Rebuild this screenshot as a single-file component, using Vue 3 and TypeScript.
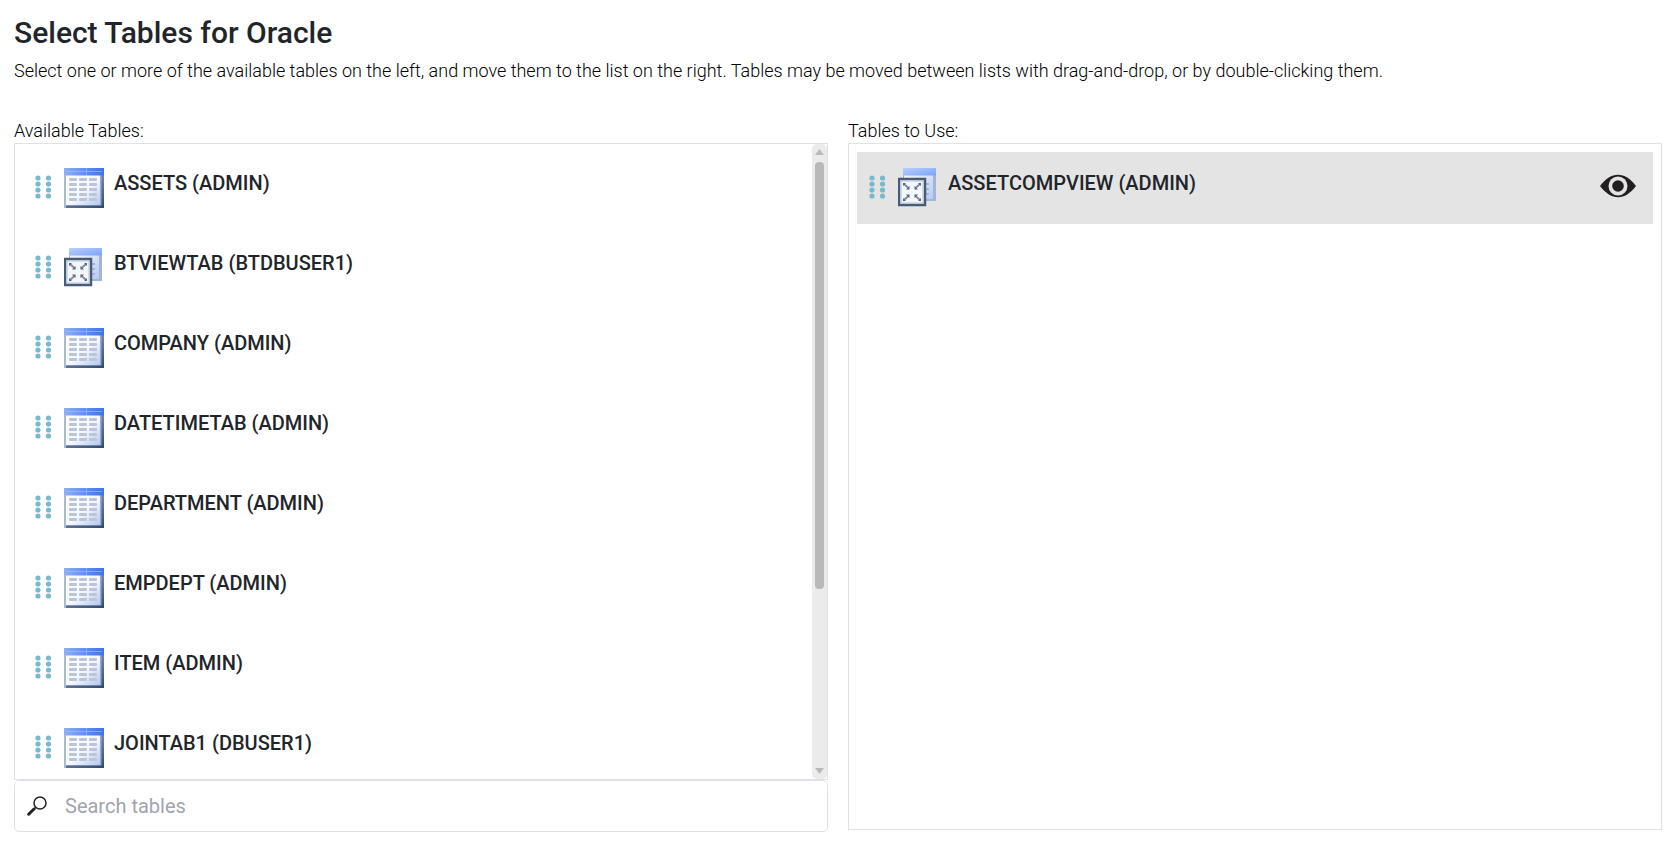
<script setup lang="ts">
import { ref } from 'vue'

interface TableEntry {
  name: string
  kind: 'table' | 'view'
}

const available: TableEntry[] = [
  { name: 'ASSETS (ADMIN)', kind: 'table' },
  { name: 'BTVIEWTAB (BTDBUSER1)', kind: 'view' },
  { name: 'COMPANY (ADMIN)', kind: 'table' },
  { name: 'DATETIMETAB (ADMIN)', kind: 'table' },
  { name: 'DEPARTMENT (ADMIN)', kind: 'table' },
  { name: 'EMPDEPT (ADMIN)', kind: 'table' },
  { name: 'ITEM (ADMIN)', kind: 'table' },
  { name: 'JOINTAB1 (DBUSER1)', kind: 'table' },
]
const selected: TableEntry[] = [{ name: 'ASSETCOMPVIEW (ADMIN)', kind: 'view' }]

const columns = [
  { id: 'available', label: 'Available Tables:', items: available },
  { id: 'selected', label: 'Tables to Use:', items: selected },
]
const search = ref('')
const dotRows = [3, 9, 15, 21]
const cellRows = [11, 16, 21, 26, 31]
</script>

<template>
  <main class="page">
    <svg class="defs" width="0" height="0" aria-hidden="true">
      <defs>
        <linearGradient id="head" x1="0" y1="0" x2="1" y2="0">
          <stop offset="0" stop-color="#8eb0f4" />
          <stop offset="0.55" stop-color="#5f8df0" />
          <stop offset="1" stop-color="#3f74e4" />
        </linearGradient>
        <linearGradient id="right" x1="0" y1="0" x2="0" y2="1">
          <stop offset="0" stop-color="#7186ad" />
          <stop offset="1" stop-color="#34496a" />
        </linearGradient>
        <linearGradient id="bottom" x1="0" y1="0" x2="1" y2="0">
          <stop offset="0" stop-color="#5d7194" />
          <stop offset="1" stop-color="#34496a" />
        </linearGradient>
        <linearGradient id="sheet" x1="0" y1="0" x2="1" y2="1">
          <stop offset="0" stop-color="#ffffff" />
          <stop offset="0.55" stop-color="#f4f7fd" />
          <stop offset="1" stop-color="#b3c8f0" />
        </linearGradient>
        <linearGradient id="vhead" x1="0" y1="0" x2="1" y2="1">
          <stop offset="0" stop-color="#b9cffd" />
          <stop offset="1" stop-color="#7ba2fa" />
        </linearGradient>
        <linearGradient id="vsheet" x1="0" y1="0" x2="1" y2="1">
          <stop offset="0" stop-color="#f3f6fe" />
          <stop offset="1" stop-color="#b9caee" />
        </linearGradient>
      </defs>
    </svg>

    <h1>Select Tables for Oracle</h1>
    <p class="intro">
      Select one or more of the available tables on the left, and move them to the list on the right. Tables may be
      moved between lists with drag-and-drop, or by double-clicking them.
    </p>

    <div class="columns">
      <section v-for="col in columns" :key="col.id" class="column">
        <h2 :id="col.id">{{ col.label }}</h2>
        <div class="panel">
          <ul class="list" :aria-labelledby="col.id">
            <li v-for="t in col.items" :key="t.name" class="row" :class="{ chosen: col.id === 'selected' }" draggable="true">
              <svg class="grip" width="18" height="24" viewBox="0 0 18 24" aria-hidden="true">
                <template v-for="y in dotRows" :key="y">
                  <circle cx="3" :cy="y" r="2.6" />
                  <circle cx="13.5" :cy="y" r="2.6" />
                </template>
              </svg>
              <svg v-if="t.kind === 'table'" class="icon" width="40" height="40" viewBox="0 0 40 40" aria-hidden="true">
                <rect width="40" height="40" fill="#a9bad8" />
                <rect x="2" y="7" width="34" height="30" fill="url(#sheet)" />
                <rect x="36" y="7" width="2" height="31" fill="#94a9d2" />
                <rect x="37.500" y="7" width="2.500" height="33" fill="url(#right)" />
                <rect x="2" y="37.500" width="38" height="2.500" fill="url(#bottom)" />
                <rect width="40" height="7.500" fill="url(#head)" />
                <rect x="2" y="3" width="36" height="1" fill="#a5c0f8" opacity="0.6" />
                <rect x="22" y="0" width="1" height="7" fill="#a5c0f8" opacity="0.6" />
                <g v-for="y in cellRows" :key="y" fill="#bcc4da">
                  <rect x="5" :y="y - 1" width="8" height="3" rx="1" />
                  <rect x="15" :y="y - 1" width="8" height="3" rx="1" />
                  <rect x="25" :y="y - 1" width="8" height="3" rx="1" />
                </g>
              </svg>
              <svg v-else class="icon" width="40" height="40" viewBox="0 0 40 40" aria-hidden="true">
                <rect x="5" y="0" width="33" height="33" fill="#a3b4da" />
                <rect x="6" y="7" width="29" height="24" fill="url(#vsheet)" />
                <rect x="5" y="0" width="33" height="7.500" fill="url(#vhead)" />
                <path d="M28 16h3M28 21h3M28 26h3" stroke="#a5b1e4" stroke-width="2" />
                <rect x="1" y="11" width="26" height="26" fill="#f3f6fa" stroke="#485b76" stroke-width="2.500" />
                <rect x="3" y="13" width="22" height="22" fill="none" stroke="#b4c2d4" />
                <path
                  d="M6 16l5 4.500M22 16l-5 4.500M6 32l5-4.500M22 32l-5-4.500"
                  stroke="#8390a3" stroke-width="2"
                />
                <path
                  d="M5 15h3l-3 3zM23 15h-3l3 3zM5 33h3l-3-3zM23 33h-3l3-3zM11.500 18v3.500h-3.500zM16.500 18v3.500h3.500zM11.500 30v-3.500h-3.500zM16.500 30v-3.500h3.500z"
                  fill="#56667e"
                />
              </svg>
              <span class="name">{{ t.name }}</span>
              <button v-if="col.id === 'selected'" class="preview" type="button" aria-label="Preview table">
                <svg width="38" height="24" viewBox="0 0 38 24" aria-hidden="true">
                  <path d="M1 12C7 4.500 12.500 .8 19 .8S31 4.500 37 12C31 19.500 25.500 23.200 19 23.200S7 19.500 1 12z" fill="#231f20" />
                  <circle cx="19" cy="12" r="9.500" fill="#e4e4e4" />
                  <circle cx="19" cy="12" r="5.800" fill="#231f20" />
                </svg>
              </button>
            </li>
          </ul>
          <div v-if="col.id === 'available'" class="track" aria-hidden="true">
            <svg width="9" height="6" viewBox="0 0 9 6"><path d="M4.500 0L9 6H0z" /></svg>
            <div class="rail"><div class="thumb"></div></div>
            <svg width="9" height="6" viewBox="0 0 9 6"><path d="M4.500 6L9 0H0z" /></svg>
          </div>
        </div>
        <label v-if="col.id === 'available'" class="search">
          <svg width="20" height="20" viewBox="0 0 20 20" aria-hidden="true">
            <circle cx="13" cy="7" r="6" fill="none" stroke="#231f20" stroke-width="1.500" />
            <path d="M8.500 11.500L6.500 13.500" stroke="#231f20" stroke-width="1.500" />
            <path d="M7 13L1.700 18.200" stroke="#231f20" stroke-width="3" stroke-linecap="round" />
          </svg>
          <input v-model="search" type="text" placeholder="Search tables" aria-label="Search tables" />
        </label>
      </section>
    </div>
  </main>
</template>

<style>
body {
  margin: 0;
  background: #fff;
}
</style>

<style scoped>
.page {
  box-sizing: border-box;
  height: 100vh;
  min-height: 400px;
  padding: 15px 11px 13px 14px;
  display: flex;
  flex-direction: column;
  font-family: Roboto, "Liberation Sans", sans-serif;
  font-size: 18px;
  line-height: 24px;
  color: #212529;
}
.defs {
  position: absolute;
}
h1 {
  margin: 0;
  font-size: 30px;
  line-height: 36px;
  font-weight: 500;
}
.intro {
  margin: 8px 0 35px;
  font-weight: 300;
  color: #000;
}
h2 {
  margin: 0;
  font-size: 18px;
  line-height: 25px;
  font-weight: 300;
  color: #000;
}
.columns {
  flex: 1;
  min-height: 0;
  display: flex;
  gap: 20px;
}
.column {
  flex: 1;
  min-width: 0;
  display: flex;
  flex-direction: column;
}
.column:last-child {
  padding-bottom: 2px;
}
.panel {
  flex: 1;
  min-height: 0;
  display: flex;
  border: 1px solid #dee2e6;
}
.list {
  flex: 1;
  margin: 0;
  padding: 8px;
  list-style: none;
  overflow-y: auto;
  scrollbar-width: none;
}
.row {
  box-sizing: border-box;
  height: 72px;
  margin-bottom: 8px;
  padding: 16px 16px 0 12px;
  display: flex;
  align-items: flex-start;
}
.chosen {
  background: #e4e4e4;
}
.grip {
  margin: 7px 11px 0 0;
  fill: #78b9ce;
}
.icon {
  margin-right: 10px;
}
.name {
  flex: 1;
  padding-top: 3px;
  font-size: 20px;
  font-weight: 500;
}
.preview {
  margin-top: 6px;
  padding: 0;
  border: 0;
  background: none;
  cursor: pointer;
}
.preview svg {
  display: block;
}
.track {
  box-sizing: border-box;
  width: 15px;
  padding: 5px 0;
  display: flex;
  flex-direction: column;
  align-items: center;
  background: #ebebeb;
  border-radius: 5px;
}
.track svg {
  fill: #b9b9b9;
}
.rail {
  flex: 1;
  padding: 7px 0;
}
.thumb {
  width: 9px;
  height: 71.3%;
  border-radius: 4px;
  background: #b9b9b9;
}
.search {
  box-sizing: border-box;
  height: 52px;
  padding: 0 12px;
  display: flex;
  align-items: center;
  gap: 18px;
  border: 1px solid #dee2e6;
  border-radius: 5px;
}
.search input {
  flex: 1;
  min-width: 0;
  padding: 0;
  border: 0;
  outline: 0;
  background: none;
  font: inherit;
  font-size: 20px;
  color: inherit;
}
.search input::placeholder {
  color: #a0a4b0;
  opacity: 1;
}
</style>
